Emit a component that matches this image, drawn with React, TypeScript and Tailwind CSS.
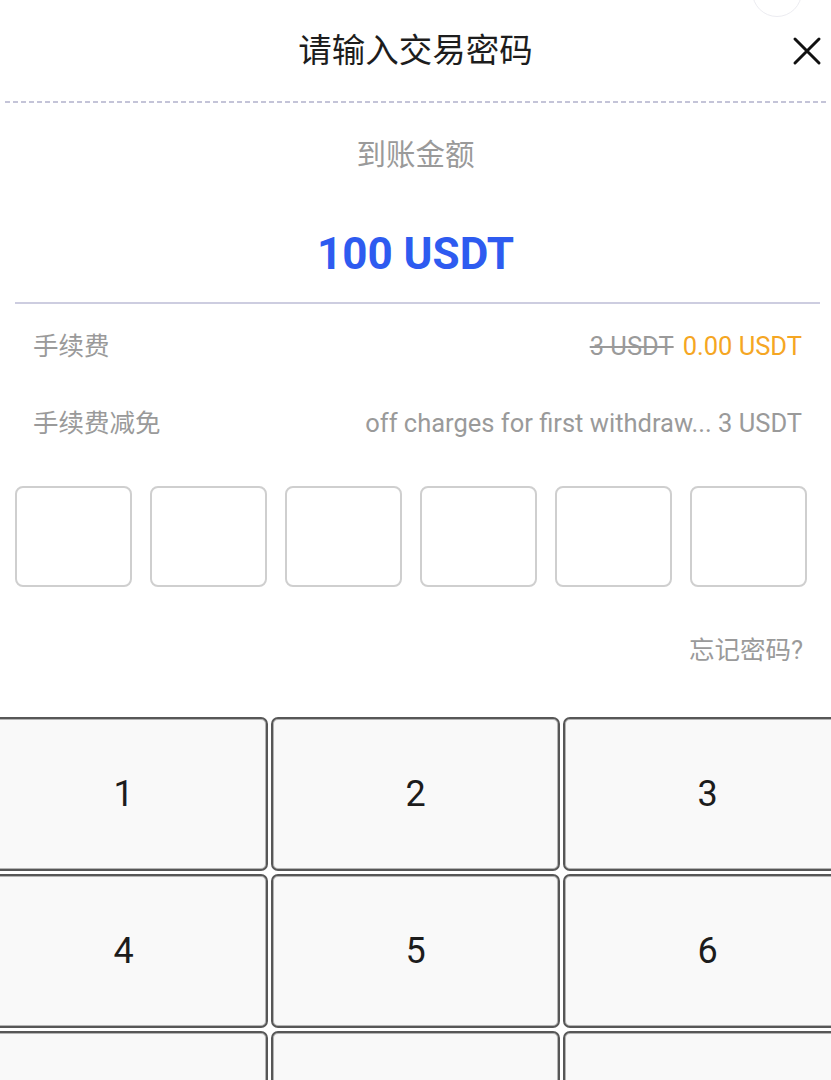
import React from "react";

const FONT = { fontFamily: 'Roboto, "Noto Sans CJK SC", "Noto Sans", sans-serif' };

function Key({ label }: { label: string }) {
  return (
    <div className="flex items-center justify-center h-[154px] rounded-[7px] border-2 border-[#575757] bg-[#f9f9f9] shadow-[inset_0_0_0_1px_#b4b4b4] text-[36px] text-[#1c1c1c] leading-none">
      {label}
    </div>
  );
}

export default function App() {
  const keys = ["1", "2", "3", "4", "5", "6", "", "", ""];
  return (
    <div className="relative w-[831px] h-[1080px] overflow-hidden bg-white" style={FONT}>
      {/* faint circle peeking at the top */}
      <div className="absolute left-[752px] top-[-33px] w-[50px] h-[50px] rounded-full border border-[#ececf1]" />

      {/* header */}
      <div className="relative flex items-center justify-center h-[101px]">
        <span className="text-[33.5px] leading-none text-[#1d1d1d]">请输入交易密码</span>
        <svg className="absolute left-[792px] top-[36px]" width="30" height="30" viewBox="0 0 30 30">
          <path d="M3 3 L27 27 M27 3 L3 27" stroke="#111" strokeWidth="3" strokeLinecap="round" fill="none" />
        </svg>
      </div>
      <div className="mx-[5px] h-[2px] bg-[repeating-linear-gradient(90deg,#c4c4d8_0_5px,transparent_5px_8px)]" />

      {/* amount */}
      <div className="flex flex-col items-center h-[199px]">
        <div className="pt-[37px] text-[29.5px] leading-[30px] text-[#9a9a9a]">到账金额</div>
        <div className="mt-[59px] text-[44px] leading-[50px] font-bold text-[#2e5bf0]">100 USDT</div>
      </div>
      <div className="ml-[15px] mr-[11px] h-[2px] bg-[#cdcde0]" />

      {/* fee rows */}
      <div className="flex items-center justify-between h-[84px] pl-[33px] pr-[29px] text-[25.5px] text-[#9a9a9a]">
        <span>手续费</span>
        <span>
          <span className="line-through">3 USDT</span>
          <span className="ml-[9px] text-[#f5a623]">0.00 USDT</span>
        </span>
      </div>
      <div className="flex items-center justify-between h-[70px] pl-[33px] pr-[29px] text-[25.5px] text-[#9a9a9a]">
        <span>手续费减免</span>
        <span>off charges for first withdraw... 3 USDT</span>
      </div>

      {/* password boxes */}
      <div className="mt-[28px] ml-[15px] flex gap-[18px]">
        {[0, 1, 2, 3, 4, 5].map((i) => (
          <div key={i} className="w-[117px] h-[101px] rounded-[8px] border-2 border-[#cfcfcf] bg-white" />
        ))}
      </div>

      {/* forgot */}
      <div className="mt-[43px] h-[40px] flex items-center justify-end pr-[28px] text-[25.5px] text-[#9a9a9a]">
        忘记密码?
      </div>

      {/* keypad */}
      <div className="mt-[47px] ml-[-21px] w-[873px] grid grid-cols-3 gap-[3px]">
        {keys.map((k, i) => (
          <Key key={i} label={k} />
        ))}
      </div>
    </div>
  );
}
